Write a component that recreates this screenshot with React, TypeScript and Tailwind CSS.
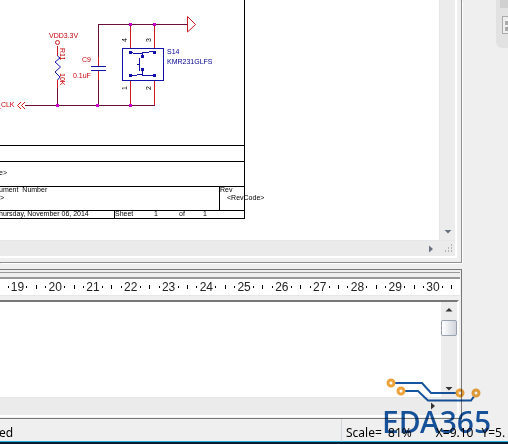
import { useState } from 'react';

const rulerMarks = [18, 19, 20, 21, 22, 23, 24, 25, 26, 27, 28, 29, 30];

function Schematic() {
    return (
        <svg
            width="270"
            height="225"
            viewBox="0 0 270 225"
            fill="none"
            shapeRendering="crispEdges"
            fontFamily="'Liberation Sans', Arial, sans-serif"
            fontSize="7"
            className="block shrink-0"
        >
            {/* nets */}
            <g stroke="#6b0f3c">
                <path d="M98.500 61V24.500H187M98.500 73V105.500M25 105.500H155M57.500 88V105" />
            </g>
            <g stroke="#cc1a20">
                <path d="M130.500 24V48M154.500 24V48M130.500 81V105M154.500 81V105M57.500 46V56M57.500 80V88M98.500 57V66M98.500 71V80" />
                <g shapeRendering="auto">
                    <path d="M187.500 16.500V32L195.500 24.500Z" />
                    <circle cx="57.500" cy="42.500" r="2" />
                    <path d="M21 102L17.500 105.500L21 109M25 102L21.500 105.500L25 109" />
                </g>
            </g>

            {/* resistor, capacitor and switch */}
            <g stroke="#1212a8">
                <path d="M57.500 56L60 58L55 62L60.500 67L55 72L60 77L57.500 80" shapeRendering="auto" />
                <path d="M91 66.500H106M91 70.500H106" />
                <rect x="122.500" y="48.500" width="41" height="32" />
                <path d="M130 52.500H133M133 53.500H142M142 52.500H149M149 51.500H155M142.500 53V57M139.500 58V71M137 64.500H139M142.500 69V75M130 75.500H137M137 74.500H142M142 75.500H155" />
            </g>
            <g fill="#1212a8">
                <rect x="129" y="51" width="3" height="3" />
                <rect x="153" y="51" width="3" height="3" />
                <rect x="141" y="55" width="3" height="3" />
                <rect x="141" y="68" width="3" height="3" />
                <rect x="129" y="74" width="3" height="3" />
                <rect x="153" y="74" width="3" height="3" />
            </g>
            <g fill="#c800c8">
                <rect x="129" y="23" width="3" height="3" />
                <rect x="153" y="23" width="3" height="3" />
                <rect x="56" y="104" width="3" height="3" />
                <rect x="96" y="104" width="3" height="3" />
                <rect x="129" y="104" width="3" height="3" />
            </g>

            <g fill="#c80008">
                <text x="49" y="38">VDD3.3V</text>
                <text x="82" y="62">C9</text>
                <text x="73" y="78">0.1uF</text>
                <text x="-3" y="107">_CLK</text>
                <text transform="translate(60 48) rotate(90)">R11</text>
                <text transform="translate(60 73) rotate(90)">10K</text>
            </g>
            <g fill="#000090">
                <text x="167" y="54">S14</text>
                <text x="167" y="64">KMR231GLFS</text>
            </g>
            <g fill="#000">
                <text transform="translate(127 42) rotate(-90)">4</text>
                <text transform="translate(151 42) rotate(-90)">3</text>
                <text transform="translate(127 90) rotate(-90)">1</text>
                <text transform="translate(151 90) rotate(-90)">2</text>
            </g>

            {/* title block */}
            <path
                stroke="#000"
                d="M244.500 0V219M0 145.500H245M0 161.500H245M0 186.500H245M0 210.500H245M0 218.500H245M219.500 186V210M114.500 210V218"
            />
            <g fill="#000">
                <text x="-1" y="175">e&gt;</text>
                <text x="-1" y="192">ument&#160; Number</text>
                <text x="-4" y="200">e&gt;</text>
                <text x="-1" y="216">hursday, November 06, 2014</text>
                <text x="115" y="216">Sheet</text>
                <text x="154" y="216">1</text>
                <text x="179" y="216">of</text>
                <text x="203" y="216">1</text>
                <text x="220" y="192">Rev</text>
                <text x="227" y="200">&lt;RevCode&gt;</text>
            </g>
        </svg>
    );
}

function Arrow({ direction }: { direction: 'up' | 'down' | 'right' }) {
    const paths = {
        up: 'M0.500 5.500L4 2L7.500 5.500Z',
        down: 'M0.500 2L7.500 2L4 5.500Z',
        right: 'M2 0.500L6 4L2 7.500Z',
    };

    return (
        <svg width="8" height="8" viewBox="0 0 8 8" fill="currentColor">
            <path d={paths[direction]} />
        </svg>
    );
}

function ScrollButton({ direction, label }: { direction: 'up' | 'down' | 'right'; label: string }) {
    return (
        <button type="button" aria-label={label} className="flex size-4 items-center justify-center">
            <Arrow direction={direction} />
        </button>
    );
}

function Grip() {
    return (
        <svg width="10" height="10" viewBox="0 0 10 10" fill="#b4b4b4" shapeRendering="crispEdges">
            <path d="M6 0h1v2H6zM3 3h1v2H3zM6 3h1v2H6zM0 6h1v2H0zM3 6h1v2H3zM6 6h1v2H6z" />
        </svg>
    );
}

function Ruler() {
    return (
        <div className="mr-px overflow-hidden border-t-2 border-b border-t-[#999] border-b-gray-200 bg-white">
            <div className="-mr-1.5 -ml-[25px] grid h-4 grid-cols-13">
                {rulerMarks.map((mark) => (
                    <div key={mark} className="grid grid-cols-4 items-center justify-items-center">
                        <span className="flex w-0 justify-center font-['Liberation_Sans_Narrow','Liberation_Sans',sans-serif] text-[12px] leading-4 text-[#222]">
                            {mark}
                        </span>
                        <i className="h-0.5 w-px bg-black" />
                        <i className="h-1 w-px bg-black" />
                        <i className="h-0.5 w-px bg-black" />
                    </div>
                ))}
            </div>
        </div>
    );
}

function Logo() {
    return (
        <div className="pointer-events-none absolute right-3.5 bottom-1 flex w-28 flex-col items-start mix-blend-multiply">
            <svg width="100" height="28" viewBox="0 0 100 28" fill="none" className="ml-0.5">
                <path d="M10 7H38L47 17H74M20 15H34L44 24.500H87L91 19" stroke="#1655a2" strokeWidth="2" />
                <g fill="#fff" stroke="#eda33b" strokeWidth="3">
                    <circle cx="7" cy="7" r="3" />
                    <circle cx="17" cy="15" r="3" />
                    <circle cx="76" cy="17" r="3" />
                    <circle cx="92" cy="17" r="3" />
                </g>
            </svg>
            <span className="font-['Noto_Sans',sans-serif] text-[30px] leading-9 font-medium text-[#1655a2]">EDA365</span>
        </div>
    );
}

export default function App() {
    const [notes, setNotes] = useState<string>('');

    return (
        <div className="relative flex min-h-screen flex-col overflow-hidden bg-[#efefef] font-['Noto_Sans',sans-serif] text-black">
            <div className="flex flex-1">
                <main className="flex min-w-0 flex-1 flex-col">
                    <section className="border-r border-b border-[#909090] pr-1 pb-1 shadow-[1px_1px_0_#fff]">
                        <div className="border-r-2 border-b-2 border-white">
                            <div className="flex">
                                <div className="h-60 min-w-0 flex-1 overflow-hidden bg-white">
                                    <Schematic />
                                </div>
                                <div className="flex w-4 flex-col justify-end border-l border-gray-200 bg-[#ececec] text-gray-500">
                                    <ScrollButton direction="down" label="Scroll drawing down" />
                                </div>
                            </div>
                            <div className="flex h-4 items-center border-t border-gray-200 bg-[#ebebeb] text-gray-500">
                                <div className="flex flex-1 justify-end">
                                    <ScrollButton direction="right" label="Scroll drawing right" />
                                </div>
                                <div className="flex w-4 items-end justify-end">
                                    <Grip />
                                </div>
                            </div>
                        </div>
                    </section>

                    <section className="mt-1.5 flex flex-1 flex-col border-t border-r border-b border-[#777] pt-0.5 pb-px">
                        <div className="mr-px h-[5px] border-t border-[#999]" />
                        <Ruler />
                        <div className="mt-1 mr-0.5 flex flex-1 flex-col border-t-2 border-r-2 border-b-2 border-t-[#777] border-r-white border-b-white">
                            <div className="flex flex-1">
                                <textarea
                                    aria-label="Notes"
                                    value={notes}
                                    onChange={(e) => setNotes(e.target.value)}
                                    className="min-w-0 flex-1 resize-none bg-white outline-none"
                                />
                                <div className="flex w-4 flex-col bg-[#ececec] text-[#333]">
                                    <ScrollButton direction="up" label="Scroll up" />
                                    <div className="mt-0.5 h-4 rounded-xs border border-gray-400 bg-linear-to-r from-white to-gray-300" />
                                    <div className="flex-1" />
                                    <ScrollButton direction="down" label="Scroll down" />
                                </div>
                            </div>
                            <div className="flex h-[18px] items-start justify-end border-t border-gray-200 bg-[#ebebeb] pr-4 text-[#333]">
                                <ScrollButton direction="right" label="Scroll right" />
                            </div>
                        </div>
                    </section>
                </main>

                <aside className="flex w-[46px] justify-end">
                    <div className="flex h-12 w-3 flex-col items-end rounded-bl-md bg-[#e2e2e2]">
                        <div className="h-2 w-2 bg-[#d0d0d0]" />
                        <svg width="6" height="18" viewBox="0 0 6 18" className="mt-2" shapeRendering="crispEdges">
                            <path d="M6 0.500H0.500V17.500H6" fill="#eee" stroke="#aaa" />
                            <path d="M3 5h3v4H3zM3 11h3v4H3z" fill="#aaa" />
                        </svg>
                    </div>
                </aside>
            </div>

            <footer className="flex h-[25px] border-b-2 border-[#051d30] text-[12px] leading-7">
                <div className="-ml-px flex-1 border-b border-[#2bb0dc]">ed</div>
                <div className="flex w-[167px] gap-6 border-b border-l border-b-[#2bb0dc] border-l-gray-300 pl-1 whitespace-nowrap">
                    <span>Scale=&#160; 81%</span>
                    <div className="flex gap-2">
                        <span>X=9.10</span>
                        <span>Y=5.</span>
                    </div>
                </div>
            </footer>
            <Logo />
        </div>
    );
}
